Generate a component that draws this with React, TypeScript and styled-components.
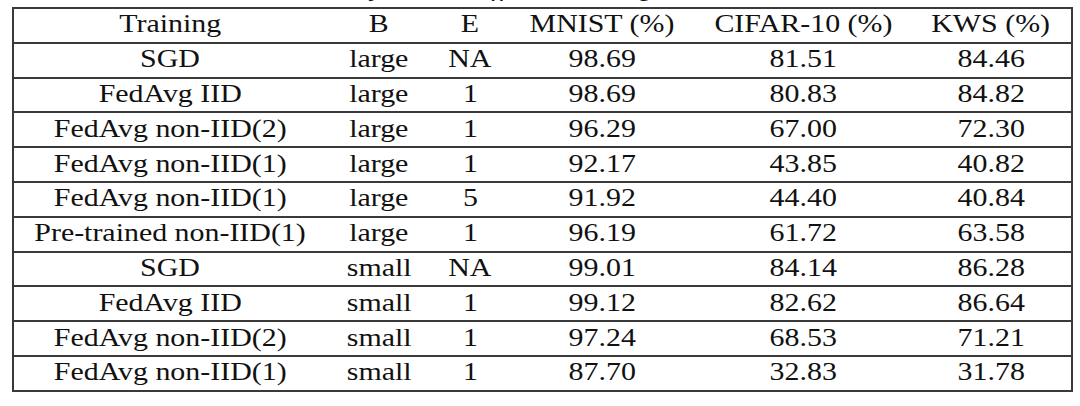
import React from "react";
import styled, { createGlobalStyle } from "styled-components";

const GlobalStyle = createGlobalStyle`
  html, body {
    margin: 0;
    padding: 0;
    background: #ffffff;
  }
  body {
    font-family: "Liberation Serif", "Times New Roman", serif;
    color: #111111;
  }
`;

const Page = styled.div`
  width: 1080px;
  height: 406px;
  overflow: hidden;
  padding-left: 12px;
  box-sizing: border-box;
`;

// caption of the table sits above the crop, only its descenders show
const Caption = styled.div`
  width: 1059px;
  height: 7px;
  overflow: hidden;
  display: flex;
  align-items: flex-end;
  justify-content: center;
  padding-bottom: 6px;
  box-sizing: content-box;
  margin-top: -6px;
`;

const CaptionText = styled.span`
  display: inline-block;
  font-style: italic;
  font-size: 26px;
  line-height: 1;
  white-space: nowrap;
  transform: scaleX(1.14);
`;

const Table = styled.table`
  width: 1059px;
  border-collapse: collapse;
  table-layout: fixed;
  border: 2px solid #3a3a3a;
`;

const Row = styled.tr`
  border-top: 2px solid #3a3a3a;
`;

const Cell = styled.td`
  height: 30.8px;
  padding: 0 0 2px 0;
  text-align: center;
  font-size: 26px;
  font-weight: 400;
  line-height: 1;
  white-space: nowrap;
`;

const Text = styled.span`
  display: inline-block;
  transform: scaleX(1.15);
`;

const columns = [314, 104, 78, 186, 216, 161];

const header = ["Training", "B", "E", "MNIST (%)", "CIFAR-10 (%)", "KWS (%)"];

const rows: string[][] = [
  ["SGD", "large", "NA", "98.69", "81.51", "84.46"],
  ["FedAvg IID", "large", "1", "98.69", "80.83", "84.82"],
  ["FedAvg non-IID(2)", "large", "1", "96.29", "67.00", "72.30"],
  ["FedAvg non-IID(1)", "large", "1", "92.17", "43.85", "40.82"],
  ["FedAvg non-IID(1)", "large", "5", "91.92", "44.40", "40.84"],
  ["Pre-trained non-IID(1)", "large", "1", "96.19", "61.72", "63.58"],
  ["SGD", "small", "NA", "99.01", "84.14", "86.28"],
  ["FedAvg IID", "small", "1", "99.12", "82.62", "86.64"],
  ["FedAvg non-IID(2)", "small", "1", "97.24", "68.53", "71.21"],
  ["FedAvg non-IID(1)", "small", "1", "87.70", "32.83", "31.78"],
];

export default function App() {
  return (
    <>
      <GlobalStyle />
      <Page>
        <Caption>
          <CaptionText>
            Test accuracy under different settings and batch sizes.
          </CaptionText>
        </Caption>
        <Table>
          <colgroup>
            {columns.map((w, i) => (
              <col key={i} style={{ width: w }} />
            ))}
          </colgroup>
          <thead>
            <Row>
              {header.map((h) => (
                <Cell as="th" key={h}>
                  <Text>{h}</Text>
                </Cell>
              ))}
            </Row>
          </thead>
          <tbody>
            {rows.map((r, i) => (
              <Row key={i}>
                {r.map((c, j) => (
                  <Cell key={j}>
                    <Text>{c}</Text>
                  </Cell>
                ))}
              </Row>
            ))}
          </tbody>
        </Table>
      </Page>
    </>
  );
}
